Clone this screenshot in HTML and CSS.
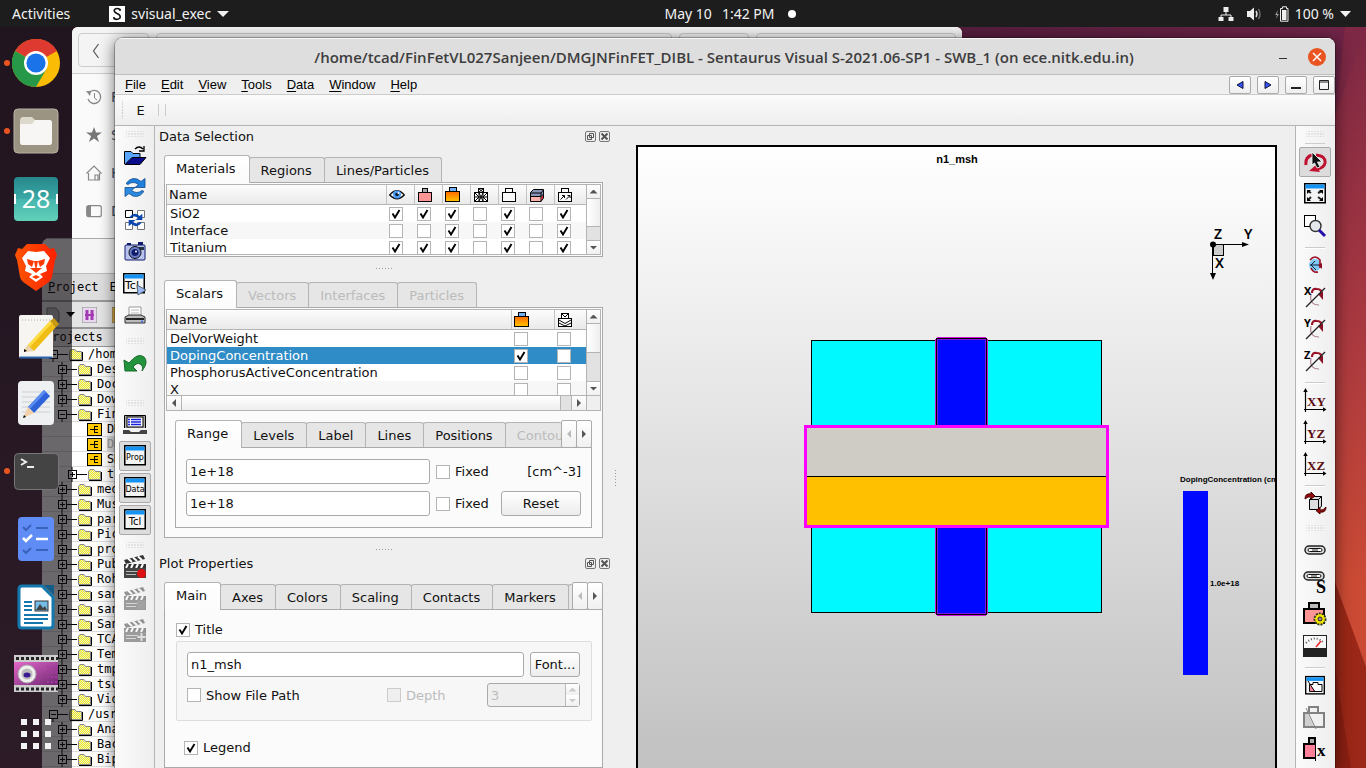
FILE: index.html
```html
<!DOCTYPE html>
<html lang="en">
<head>
<meta charset="utf-8">
<title>Sentaurus Visual - SWB_1</title>
<link rel="stylesheet" href="styles.css">
</head>
<body>
<svg class="defs" aria-hidden="true">
  <defs>
    <linearGradient id="orange" x1="0" y1="0" x2="0" y2="1"><stop offset="0" stop-color="#ff6a00"/><stop offset="1" stop-color="#ffc400"/></linearGradient>
    <linearGradient id="teal" x1="0" y1="0" x2="0" y2="1"><stop offset="0" stop-color="#27878c"/><stop offset=".5" stop-color="#3aa9a5"/><stop offset=".5" stop-color="#46b5ad"/><stop offset="1" stop-color="#62d1ba"/></linearGradient>
    <linearGradient id="purple" x1="0" y1="0" x2="1" y2="1"><stop offset="0" stop-color="#e268c8"/><stop offset="1" stop-color="#6e2672"/></linearGradient>
    <linearGradient id="bravefill" x1="0" y1="0" x2="1" y2="0"><stop offset="0" stop-color="#ff5500"/><stop offset="1" stop-color="#ff2000"/></linearGradient>
    <pattern id="dither" width="2" height="2" patternUnits="userSpaceOnUse"><rect width="2" height="2" fill="#ffff00"/><rect width="1" height="1" fill="#ddd"/><rect x="1" y="1" width="1" height="1" fill="#ddd"/></pattern>
    <symbol id="folder" viewBox="0 0 15 13"><path d="M1.500 11.500V3.500L3 1.500H7L8.500 3.500H13.500V11.500Z" fill="url(#dither)" stroke="#888"/><path d="M14.500 4V12.500H2" fill="none" stroke="#000"/></symbol>
    <symbol id="leaf" viewBox="0 0 15 13"><rect x=".5" y=".5" width="14" height="12" fill="#ffc800" stroke="#000"/><path d="M3 6.500H8M7.500 3V10M8 3.500H11M8 6.500H11M8 9.500H11" stroke="#000" fill="none"/></symbol>
    <symbol id="plus" viewBox="0 0 20 15"><path d="M5 0V15M9 7.500H20" stroke="#000"/><rect x="1.500" y="3.500" width="8" height="8" fill="#fff" stroke="#000"/><path d="M3 7.500H8M5.500 5V10" stroke="#000"/></symbol>
    <symbol id="minus" viewBox="0 0 20 15"><path d="M5 7V15M9 7.500H20" stroke="#000"/><rect x="1.500" y="3.500" width="8" height="8" fill="#fff" stroke="#000"/><path d="M3 7.500H8" stroke="#000"/></symbol>
    <symbol id="h-eye" viewBox="0 0 16 16"><path d="M.7 8Q8-.5 15.300 8Q8 15.500 .7 8Z" fill="#fff" stroke="#111" stroke-width="1.300"/><circle cx="8" cy="7.500" r="4" fill="#4a9cf5"/><circle cx="8" cy="7.500" r="1.800" fill="#123"/><circle cx="9.500" cy="6" r="1" fill="#fff"/></symbol>
    <symbol id="h-pink" viewBox="0 0 16 16"><rect x="5.500" y="1.500" width="5" height="4" fill="#aaa" stroke="#000"/><rect x="1.500" y="5.500" width="13" height="9" fill="#ff9696" stroke="#000"/></symbol>
    <symbol id="h-orange" viewBox="0 0 16 16"><rect x="4.500" y=".5" width="7" height="5" fill="#6fb1f7" stroke="#000"/><rect x=".5" y="4.500" width="14" height="10" fill="url(#orange)" stroke="#000"/></symbol>
    <symbol id="h-mesh" viewBox="0 0 16 16"><rect x="5.500" y="1.500" width="5" height="4" fill="#fff" stroke="#000"/><rect x="1.500" y="5.500" width="13" height="9" fill="#fff" stroke="#000"/><path d="M2 6L6 10L2 14M6 6V14M10 6V14M6 6L10 14M10 6L6 14M14 6L10 10L14 14M2 10H14M6 2L10 5M10 2L6 5" stroke="#000" fill="none"/></symbol>
    <symbol id="h-box" viewBox="0 0 16 16"><rect x="4.500" y="1.500" width="7" height="4" fill="#f8f8f8" stroke="#000"/><rect x="1.500" y="5.500" width="13" height="9" fill="#f8f8f8" stroke="#000"/></symbol>
    <symbol id="h-cube" viewBox="0 0 16 16"><path d="M1.500 5.500L4.500 2.500H14.500V11L12 14.500H1.500Z" fill="#8793b8" stroke="#000"/><rect x="2" y="10" width="10" height="4" fill="#ffb0a8"/><path d="M1.500 6H12V14.500M12 6L14.500 3M2 9.500H12L14.500 7" stroke="#000" fill="none"/><path d="M12.500 10L14 8.500V11L12.500 13Z" fill="#e22"/></symbol>
    <symbol id="h-vec" viewBox="0 0 16 16"><rect x="4.500" y="1.500" width="7" height="4" fill="#f8f8f8" stroke="#000"/><rect x="1.500" y="5.500" width="13" height="9" fill="#f8f8f8" stroke="#000"/><path d="M3.500 12.500L7 9M5 8.500H7.500V11M9 12.500L12.500 9M10.500 8.500H13V11" fill="none" stroke="#000"/></symbol>
    <symbol id="h-iso" viewBox="0 0 16 16"><rect x="4.500" y="1.500" width="7" height="5" fill="#fff" stroke="#000"/><rect x="1.500" y="6.500" width="13" height="8" fill="#fff" stroke="#000"/><path d="M2 8L8 11.500L14 8M2 11L8 14L14 11M5 2L8 5L11 2" fill="none" stroke="#000"/></symbol>
    <symbol id="window" viewBox="0 0 22 22"><rect x=".75" y="1.750" width="20.500" height="19" fill="#f4f4f4" stroke="#000" stroke-width="1.500"/><rect x="1.500" y="2.500" width="19" height="4" fill="#1593f5"/></symbol>
    <symbol id="arrows" viewBox="0 0 22 20"><path d="M2 6Q9-3 17 4L21 1V10H11L14.500 7Q9 3 4 7Z" fill="#1e80dc" stroke="#124a8a" stroke-width=".8"/><path d="M20 14Q13 23 5 16L1 19V10H11L7.500 13Q13 17 18 13Z" fill="#2b8be3" stroke="#124a8a" stroke-width=".8"/></symbol>
    <symbol id="arrows-dark" viewBox="0 0 22 20"><path d="M2 6Q9-3 17 4L21 1V10H11L14.500 7Q9 3 4 7Z" fill="#0a48b0"/><path d="M20 14Q13 23 5 16L1 19V10H11L7.500 13Q13 17 18 13Z" fill="#0a48b0"/></symbol>
    <symbol id="clap" viewBox="0 0 24 24"><path d="M1 5L20 0L22 4L3 9Z" fill="#333"/><path d="M5 3.500L9 7M10 2.500L14 6M15 1.500L19 5" stroke="#fff" stroke-width="2"/><rect x="1" y="9" width="22" height="4" fill="#333"/><path d="M5 9L3 13M10 9L8 13M15 9L13 13M20 9L18 13" stroke="#fff" stroke-width="2"/><rect x="1" y="13" width="22" height="10" fill="#444"/><path d="M3 16.500H15M3 19.500H13" stroke="#bbb"/></symbol>
    <symbol id="spin" viewBox="0 0 24 24"><path d="M9 8Q9 3 14 4Q19 4 19 10" fill="none" stroke="#9a1025" stroke-width="2.200"/><path d="M15 9L20 7V15Z" fill="#8a1025"/><path d="M8 9Q6 20 16 20" fill="none" stroke="#b08090" stroke-width="1.200"/><path d="M3 22L22 3" stroke="#222" stroke-width="1.200"/></symbol>
    <symbol id="axes" viewBox="0 0 24 24"><path d="M2.500 24V3M1 21.500H21" stroke="#000" stroke-width="1.200"/><path d="M.3 4L2.500 0L4.700 4ZM20 19.300L23.500 21.500L20 23.700Z" fill="#000"/></symbol>
    <symbol id="chain" viewBox="0 0 22 10"><rect x="1" y="1" width="20" height="8" rx="4" fill="#ddd" stroke="#222" stroke-width="1.500"/><rect x="4" y="3.500" width="14" height="3" rx="1.500" fill="#fff" stroke="#111"/><path d="M8 5H14" stroke="#333"/></symbol>
  </defs>
</svg>

<header class="topbar">
  <div class="topbar-left">
    <button class="bar-btn">Activities</button>
    <button class="bar-btn app-menu"><svg width="16" height="16"><rect width="16" height="16" fill="#fff"/><path d="M11 5V3.500Q8 1.500 5.500 3.500Q4.500 6 8 7.500Q12 9 11 12Q8 14.500 5 12.500V11" fill="none" stroke="#111" stroke-width="1.600"/></svg><span>svisual_exec</span><svg width="12" height="6"><path d="M0 0H12L6 6Z" fill="#f2f2f2"/></svg></button>
  </div>
  <button class="bar-btn clock"><span>May 10</span><span>1:42 PM</span><i class="note-dot"></i></button>
  <button class="bar-btn status" aria-label="System menu">
    <svg width="16" height="16"><path d="M8 6V9M3 11V9H13V11" stroke="#eee" fill="none"/><path d="M5.500 1H10.500V6H5.500ZM.5 11H5.500V15H.5ZM10.500 11H15.500V15H10.500Z" fill="#eee"/></svg>
    <svg width="16" height="16"><path d="M1 5H4L8 1.500V14.500L4 11H1Z" fill="#eee"/><path d="M10 5Q12 8 10 11" stroke="#ddd" fill="none" stroke-width="1.500"/><path d="M12.500 3Q15.500 8 12.500 13" stroke="#777" fill="none" stroke-width="1.300"/></svg>
    <svg width="15" height="16"><path d="M4 4L1 9H3L2 13L5 8H3Z" fill="#999"/><path d="M6.500 2.500H8.500V.8H12.500V2.500H14V15.200H6.500Z" fill="none" stroke="#eee"/><rect x="8" y="4" width="4.500" height="10" fill="#eee"/></svg>
    <span>100 %</span>
    <svg width="11" height="6"><path d="M0 0H11L5.500 6Z" fill="#f2f2f2"/></svg>
  </button>
</header>

<div class="desktop">
  <svg class="wall" viewBox="0 0 31 741" preserveAspectRatio="none" aria-hidden="true"><path d="M0 0H31V741H0Z" fill="#6f2347"/><path d="M10 0H31V741H0V90Z" fill="#7d2844"/><path d="M0 90L31 0V741H0Z" fill="url(#wallgrad)"/><path d="M0 555L31 640V741H0Z" fill="#9a2717"/><path d="M0 640L16 741H0Z" fill="#8a1f12"/><defs><linearGradient id="wallgrad" x1="0" y1="0" x2="0" y2="1"><stop offset="0" stop-color="#7d2844"/><stop offset=".4" stop-color="#a83840"/><stop offset=".75" stop-color="#ca4a34"/></linearGradient></defs></svg>

  <section class="files-window" aria-label="Files">
    <div class="files-head">
      <button class="files-back" aria-label="Back"><svg width="8" height="16"><path d="M6.500 1L1.500 8L6.500 15" fill="none" stroke="#555" stroke-width="1.200"/></svg></button>
      <div class="files-path"></div><div class="files-path end"></div><div class="files-path small"></div>
    </div>
    <ul class="files-list">
      <li><svg width="16" height="16"><path d="M3 4A6.500 6.500 0 1 1 2 10" fill="none" stroke="#888" stroke-width="1.300"/><path d="M0 2L5 2L4 7Z" fill="#888"/><path d="M8.500 4V9L11 11" fill="none" stroke="#888"/></svg>Recent</li>
      <li><svg width="16" height="16"><path d="M8 0L10 5.500H16L11 9L13 15L8 11.500L3 15L5 9L0 5.500H6Z" fill="#777"/></svg>Starred</li>
      <li><svg width="16" height="16"><path d="M.5 8.500L8 1L15.500 8.500M2.500 8V15H13.500V8M9 15V10H12V15" fill="none" stroke="#888" stroke-width="1.200"/></svg>Home</li>
      <li><svg width="16" height="16"><rect x=".7" y="2.700" width="14.600" height="11" rx="2" fill="none" stroke="#888" stroke-width="1.200"/><path d="M1 3H5V14H1Z" fill="#888"/></svg>Desktop</li>
    </ul>
  </section>

  <section class="swb-window" aria-label="Sentaurus Workbench">
    <div class="swb-title"></div>
    <div class="swb-menu"><span><u>P</u>roject</span><span>Edit</span></div>
    <div class="swb-tools">
      <svg width="14" height="16"><path d="M1 1H10L13 5V15H1Z" fill="#bbb" stroke="#777"/></svg>
      <svg width="9" height="5"><path d="M0 0H9L4.500 5Z"/></svg>
      <svg class="swb-h" width="15" height="16"><rect width="15" height="16" fill="#e8d8ee" stroke="#888"/><path d="M5 3V13M10 3V13" stroke="#a23ab4" stroke-width="3"/><path d="M3 8H12" stroke="#a23ab4" stroke-width="2"/></svg>
      <svg width="14" height="16"><rect width="14" height="16" fill="#e0b040" stroke="#777"/></svg>
    </div>
    <div class="swb-heading">Projects</div>
    <ul class="tree">
      <li class="root"><svg class="ex"><use href="#minus"/></svg><svg class="fo"><use href="#folder"/></svg>/home</li>
      <li><svg class="ex"><use href="#plus"/></svg><svg class="fo"><use href="#folder"/></svg>Desktop</li>
      <li><svg class="ex"><use href="#plus"/></svg><svg class="fo"><use href="#folder"/></svg>Documents</li>
      <li><svg class="ex"><use href="#plus"/></svg><svg class="fo"><use href="#folder"/></svg>Downloads</li>
      <li><svg class="ex"><use href="#minus"/></svg><svg class="fo"><use href="#folder"/></svg>FinFet</li>
      <li class="sub leaf"><svg class="fo"><use href="#leaf"/></svg>DMG</li>
      <li class="sub leaf"><svg class="fo"><use href="#leaf"/></svg><mark>DMGJN</mark></li>
      <li class="sub leaf"><svg class="fo"><use href="#leaf"/></svg>SMG</li>
      <li class="sub"><svg class="ex"><use href="#plus"/></svg><svg class="fo"><use href="#folder"/></svg>t</li>
      <li><svg class="ex"><use href="#plus"/></svg><svg class="fo"><use href="#folder"/></svg>media</li>
      <li><svg class="ex"><use href="#plus"/></svg><svg class="fo"><use href="#folder"/></svg>Music</li>
      <li><svg class="ex"><use href="#plus"/></svg><svg class="fo"><use href="#folder"/></svg>par</li>
      <li><svg class="ex"><use href="#plus"/></svg><svg class="fo"><use href="#folder"/></svg>Pictures</li>
      <li><svg class="ex"><use href="#plus"/></svg><svg class="fo"><use href="#folder"/></svg>project</li>
      <li><svg class="ex"><use href="#plus"/></svg><svg class="fo"><use href="#folder"/></svg>Public</li>
      <li><svg class="ex"><use href="#plus"/></svg><svg class="fo"><use href="#folder"/></svg>Rohit</li>
      <li><svg class="ex"><use href="#plus"/></svg><svg class="fo"><use href="#folder"/></svg>san</li>
      <li><svg class="ex"><use href="#plus"/></svg><svg class="fo"><use href="#folder"/></svg>san</li>
      <li><svg class="ex"><use href="#plus"/></svg><svg class="fo"><use href="#folder"/></svg>San</li>
      <li><svg class="ex"><use href="#plus"/></svg><svg class="fo"><use href="#folder"/></svg>TCAD</li>
      <li><svg class="ex"><use href="#plus"/></svg><svg class="fo"><use href="#folder"/></svg>Templates</li>
      <li><svg class="ex"><use href="#plus"/></svg><svg class="fo"><use href="#folder"/></svg>tmp</li>
      <li><svg class="ex"><use href="#plus"/></svg><svg class="fo"><use href="#folder"/></svg>tsu</li>
      <li><svg class="ex"><use href="#plus"/></svg><svg class="fo"><use href="#folder"/></svg>Videos</li>
      <li class="root"><svg class="ex"><use href="#minus"/></svg><svg class="fo"><use href="#folder"/></svg>/usr</li>
      <li><svg class="ex"><use href="#plus"/></svg><svg class="fo"><use href="#folder"/></svg>Ana</li>
      <li><svg class="ex"><use href="#plus"/></svg><svg class="fo"><use href="#folder"/></svg>Bac</li>
      <li><svg class="ex"><use href="#plus"/></svg><svg class="fo"><use href="#folder"/></svg>Bip</li>
    </ul>
  </section>

  <nav class="launcher" aria-label="Dock">
    <button class="running" aria-label="Chrome"><svg viewBox="0 0 48 48"><circle cx="24" cy="24" r="24" fill="#fbbc05"/><path d="M24 24L3.200 12A24 24 0 0 1 44.800 12Z" fill="#df3a30"/><path d="M24 0A24 24 0 0 1 44.800 12H24Z" fill="#df3a30"/><path d="M24 24L3.200 12A24 24 0 0 0 24 48L34.400 30Z" fill="#279847"/><circle cx="24" cy="24" r="12" fill="#fff"/><circle cx="24" cy="24" r="9.600" fill="#1a73e8"/></svg></button>
    <button class="running" aria-label="Files"><svg viewBox="0 0 48 48"><rect x="2" y="2" width="44" height="44" rx="4" fill="#9b9483" stroke="#b8b2a4"/><path d="M8 14Q8 10 11 10H20L23 13H37Q40 13 40 16V35Q40 38 37 38H11Q8 38 8 35Z" fill="#dcd8cb"/><path d="M8 17H20L23 13H37Q40 13 40 16V35Q40 38 37 38H11Q8 38 8 35Z" fill="#f7f6f4"/></svg></button>
    <button aria-label="Calendar"><svg viewBox="0 0 48 48"><rect x="2" y="2" width="44" height="44" rx="4" fill="url(#teal)"/><path d="M3 19V29M45 19V29" stroke="#fff" stroke-width="2"/><text x="24" y="33" class="cal-text" text-anchor="middle">28</text></svg></button>
    <button aria-label="Brave"><svg viewBox="0 0 48 48"><path d="M15 1H33L38 6L42 5L45 12L43 17L40 34Q39 38 34 41L24 48L14 41Q9 38 8 34L5 17L3 12L6 5L10 6Z" fill="url(#bravefill)"/><path d="M24 9L32 8L38 15L34 23L35 28L28 31L31 34L24 39L17 34L20 31L13 28L14 23L10 15L16 8Z" fill="#fff"/><path d="M15 16L22 18L20 24L16 21ZM33 16L26 18L28 24L32 21ZM22 18L24 28L26 18M18 25L24 30L30 25M20 34L24 32L28 34L24 36Z" fill="#ff3a00"/></svg></button>
    <button aria-label="Text editor"><svg viewBox="0 0 48 48"><path d="M9 4H39Q41 4 41 6V45Q41 47 39 47H9Q7 47 7 45V6Q7 4 9 4Z" fill="#f6f5f1"/><path d="M8 46.500H40" stroke="#2a66b0" stroke-width="2"/><path d="M10 9H38" stroke="#aaa" stroke-dasharray="1 2"/><path d="M16 34L38 10L44 16L22 40L12 40Z" fill="#f0bd14"/><path d="M16 34L38 10L40 12L18 36Z" fill="#ffdd45"/><path d="M38 10L42 7L47 13L44 16Z" fill="#c89a10"/><path d="M16 34L22 40L12 41Z" fill="#e8d2b0"/><path d="M12 38L15 40L12 41Z"/></svg></button>
    <button aria-label="Editor"><svg viewBox="0 0 48 48"><rect x="6" y="2" width="36" height="44" rx="4" fill="#eef0f2"/><path d="M10 13H38M10 18H38M10 23H38M10 28H38M10 33H38" stroke="#ccd0d4"/><path d="M16 28L32 11L38 17L22 34Z" fill="#2d62d9"/><path d="M16 28L32 11L34 13L18 30Z" fill="#5b8cf0"/><path d="M16 28L22 34L11 39Z" fill="#f0d0a8"/><path d="M12 36L14 38L11 39Z"/></svg></button>
    <button class="running" aria-label="Terminal"><svg viewBox="0 0 48 48"><rect x="2.500" y="6.500" width="44" height="36" rx="4" fill="#444" stroke="#777"/><path d="M9 12L14 15L9 18M15 20H22" fill="none" stroke="#eee" stroke-width="2"/></svg></button>
    <button aria-label="Tasks"><svg viewBox="0 0 48 48"><rect x="6" y="2" width="36" height="44" rx="4" fill="#5f8df5"/><path d="M11 12L14 15L19 10M11 35L14 38L19 33M24 13H36M24 35H36" fill="none" stroke="#3a62bb" stroke-width="2"/><path d="M11 23L14 26L20 20M24 24H36" fill="none" stroke="#fff" stroke-width="2.500"/></svg></button>
    <button aria-label="Writer"><svg viewBox="0 0 48 48"><path d="M10 3H30L41 14V42Q41 45 38 45H10Q7 45 7 42V6Q7 3 10 3Z" fill="#fff" stroke="#1478ad" stroke-width="3"/><path d="M32 2H42V12Z" fill="#115c88"/><path d="M12 19H20M12 23H20M12 27H20M12 32H36M12 36H36M12 40H31" stroke="#1478ad" stroke-width="2"/><rect x="23" y="18" width="13" height="10" fill="#76bce8" stroke="#333"/><path d="M24 27L28 21L31 25L33 23L35 27Z" fill="#444"/></svg></button>
    <button aria-label="Video"><svg viewBox="0 0 48 48"><rect x="2" y="4" width="44" height="37" fill="#ccc"/><path d="M4 7.500H46M4 38H46" stroke="#222" stroke-width="3" stroke-dasharray="3 2"/><rect x="2" y="11" width="44" height="23" fill="url(#purple)"/><path d="M36 15V32M40 15V32M44 15V32" stroke="#a33aa0" stroke-width="2" stroke-dasharray="2 3"/><circle cx="15" cy="23" r="9" fill="#eee" stroke="#aaa"/><circle cx="15" cy="23" r="5.500" fill="#bbb"/><ellipse cx="15" cy="24" rx="3.500" ry="2.500" fill="#3a1890"/></svg></button>
    <button class="apps" aria-label="Show applications"><svg viewBox="0 0 48 48"><path d="M9 8h6v6H9zM21 8h6v6h-6zM33 8h6v6h-6zM9 20h6v6H9zM21 20h6v6h-6zM33 20h6v6h-6zM9 32h6v6H9zM21 32h6v6h-6zM33 32h6v6h-6z" fill="#f2f2f2"/></svg></button>
  </nav>

  <main class="app">
    <div class="titlebar">
      <h1>/home/tcad/FinFetVL027Sanjeen/DMGJNFinFET_DIBL - Sentaurus Visual S-2021.06-SP1 - SWB_1 (on ece.nitk.edu.in)</h1>
      <button class="win-min" aria-label="Minimise"></button>
      <button class="win-close" aria-label="Close"><svg width="18" height="18"><path d="M5 5L13 13M13 5L5 13" stroke="#fff" stroke-width="1.500"/></svg></button>
    </div>
    <div class="menubar">
      <nav><a href="#"><u>F</u>ile</a><a href="#"><u>E</u>dit</a><a href="#"><u>V</u>iew</a><a href="#"><u>T</u>ools</a><a href="#"><u>D</u>ata</a><a href="#"><u>W</u>indow</a><a href="#"><u>H</u>elp</a></nav>
      <div class="mdi">
        <button aria-label="Previous plot"><svg width="10" height="8"><path d="M8 .5V7.500L2 4Z" fill="#3355ff" stroke="#113"/></svg></button>
        <button aria-label="Next plot"><svg width="10" height="8"><path d="M2 .5V7.500L8 4Z" fill="#3355ff" stroke="#113"/></svg></button>
        <button aria-label="Minimise plot"><svg width="10" height="10"><path d="M0 8H10" stroke="#222" stroke-width="2"/></svg></button>
        <button aria-label="Maximise plot"><svg width="10" height="10"><path d="M.5 .5H9.500V9.500H.5ZM1 2H9" fill="none" stroke="#222"/></svg></button>
      </div>
    </div>
    <div class="toolrow"><i class="dots-v"></i><button class="e-btn">E</button><i class="vline"></i><i class="vline"></i></div>

    <div class="work">
      <div class="tools left" role="toolbar" aria-label="Files and views">
        <i class="dots-h first"></i>
        <button aria-label="Open"><svg viewBox="0 0 24 24"><path d="M1.500 20V7.500H8L10 9.500H17V14" fill="#5aa5ff" stroke="#000"/><path d="M2 20.500L9 13.500H23L17 20.500Z" fill="#0a0a8c" stroke="#000"/><path d="M12 5Q16 1 20 5M21 2V7H16" fill="none" stroke="#000" stroke-width="1.300"/></svg></button>
        <button aria-label="Reload"><svg viewBox="0 0 24 24"><use href="#arrows" x="1" y="1" width="22" height="21"/></svg></button>
        <button aria-label="Reload all"><svg viewBox="0 0 24 24"><path d="M2.500 2.500H9.500V9.500H2.500Z" fill="#fff" stroke="#000"/><path d="M14.500 2.500H21.500V9.500H14.500ZM2.500 14.500H9.500V21.500H2.500ZM14.500 14.500H21.500V21.500H14.500Z" fill="#fff" stroke="#777"/><use href="#arrows-dark" x="5" y="5" width="15" height="14"/></svg></button>
        <button aria-label="Snapshot"><svg viewBox="0 0 24 24"><rect x="2" y="5" width="20" height="15" rx="1" fill="#b8c2ee" stroke="#111b6c"/><path d="M4 3H8V5H4ZM15 2H20V5H15Z" fill="#111b6c"/><rect x="16" y="7" width="5" height="3" fill="#234"/><circle cx="12" cy="12.500" r="6" fill="#6a7cc8" stroke="#111"/><circle cx="12" cy="12.500" r="3.500" fill="#111b6c"/><circle cx="13" cy="11.500" r="1" fill="#fff"/></svg></button>
        <button aria-label="Run Tcl"><svg viewBox="0 0 24 24"><use href="#window" x="0" y="0" width="22" height="22"/><text x="2" y="17" class="win-text big">Tcl</text><path d="M14 13L23 18L15 23Z" fill="#9ab8f4" stroke="#567"/></svg></button>
        <button aria-label="Print"><svg viewBox="0 0 24 24"><path d="M6 12V3H18V12" fill="#fff" stroke="#999"/><path d="M8 6H16M8 9H16" stroke="#bbb"/><path d="M2 13L6 11H18L22 13V19H2Z" fill="#bbb" stroke="#333"/><path d="M3 15H21" stroke="#222" stroke-width="2"/><circle cx="19" cy="17.500" r="1" fill="#36f"/></svg></button>
        <i class="dots-h"></i>
        <button aria-label="Undo"><svg viewBox="0 0 24 24"><path d="M1 9L2 20L14 20L10 16Q14 11 17 13Q21 15 19 20Q26 11 21 6Q15 1 6 12Z" fill="#23943c" stroke="#176b29"/></svg></button>
        <i class="dots-h wide"></i>
        <button aria-label="Screen"><svg viewBox="0 0 24 24"><path d="M1.500 16V3.500H22.500V16" fill="#aaa" stroke="#000"/><rect x="4" y="5" width="16" height="10" fill="#fff" stroke="#000"/><path d="M5 7.500H7M8 7.500H18M5 10H7M8 10H18M5 12.500H7M8 12.500H18" stroke="#1722e0" stroke-width="1.400"/><path d="M0 18H6L8 20H16L18 18H24V22H0Z" fill="#444"/></svg></button>
        <button class="pressed" aria-label="Properties"><svg viewBox="0 0 24 24"><use href="#window" x="1" y="0" width="22" height="22"/><text x="12" y="16" class="win-text" text-anchor="middle">Prop</text></svg></button>
        <button class="pressed" aria-label="Data"><svg viewBox="0 0 24 24"><use href="#window" x="1" y="0" width="22" height="22"/><text x="12" y="16" class="win-text" text-anchor="middle">Data</text></svg></button>
        <button class="pressed" aria-label="Tcl console"><svg viewBox="0 0 24 24"><use href="#window" x="1" y="0" width="22" height="22"/><text x="12" y="17" class="win-text mid" text-anchor="middle">Tcl</text></svg></button>
        <i class="dots-h"></i>
        <button aria-label="Record movie"><svg viewBox="0 0 24 24"><use href="#clap" width="24" height="24"/><circle cx="18.500" cy="18.500" r="4.500" fill="#d11"/></svg></button>
        <button aria-label="Stop movie" disabled><svg viewBox="0 0 24 24"><use href="#clap" width="24" height="24"/><rect x="14" y="14" width="8" height="8" fill="#555"/></svg></button>
        <button aria-label="Add frame" disabled><svg viewBox="0 0 24 24"><use href="#clap" width="24" height="24"/><path d="M18.500 14V22M14.500 18H22.500" stroke="#ccc" stroke-width="2"/></svg></button>
      </div>

      <div class="docks">
        <div class="dock-title"><h2>Data Selection</h2>
          <button aria-label="Float"><svg width="11" height="11"><path d="M4.500 2.500H8.500V6.500H4.500ZM2.500 4.500H6.500V8.500H2.500Z" fill="none" stroke="#555"/></svg></button><button aria-label="Close"><svg width="11" height="11"><path d="M2.500 2.500L8.500 8.500M8.500 2.500L2.500 8.500" stroke="#555" stroke-width="2"/></svg></button></div>
        <div class="dock-body">
          <div class="tabs" role="tablist"><button class="on" role="tab">Materials</button><button role="tab">Regions</button><button role="tab">Lines/Particles</button></div>
          <div class="pane">
            <div class="grid materials">
              <div class="grid-view">
                <table>
                  <thead><tr><th class="name">Name</th><th><svg><use href="#h-eye"/></svg></th><th><svg><use href="#h-pink"/></svg></th><th><svg><use href="#h-orange"/></svg></th><th><svg><use href="#h-mesh"/></svg></th><th><svg><use href="#h-box"/></svg></th><th><svg><use href="#h-cube"/></svg></th><th class="last"><svg><use href="#h-vec"/></svg></th></tr></thead>
                  <tbody>
                    <tr><td class="name">SiO2</td><td><input type="checkbox" aria-label="SiO2 visible" checked></td><td><input type="checkbox" aria-label="SiO2 bulk" checked></td><td><input type="checkbox" aria-label="SiO2 field" checked></td><td><input type="checkbox" aria-label="SiO2 mesh"></td><td><input type="checkbox" aria-label="SiO2 border" checked></td><td><input type="checkbox" aria-label="SiO2 translucent"></td><td><input type="checkbox" aria-label="SiO2 vectors" checked></td></tr>
                    <tr class="alt"><td class="name">Interface</td><td><input type="checkbox" aria-label="Interface visible"></td><td><input type="checkbox" aria-label="Interface bulk"></td><td><input type="checkbox" aria-label="Interface field" checked></td><td><input type="checkbox" aria-label="Interface mesh"></td><td><input type="checkbox" aria-label="Interface border" checked></td><td><input type="checkbox" aria-label="Interface translucent"></td><td><input type="checkbox" aria-label="Interface vectors" checked></td></tr>
                    <tr><td class="name">Titanium</td><td><input type="checkbox" aria-label="Titanium visible" checked></td><td><input type="checkbox" aria-label="Titanium bulk" checked></td><td><input type="checkbox" aria-label="Titanium field" checked></td><td><input type="checkbox" aria-label="Titanium mesh"></td><td><input type="checkbox" aria-label="Titanium border" checked></td><td><input type="checkbox" aria-label="Titanium translucent"></td><td><input type="checkbox" aria-label="Titanium vectors" checked></td></tr>
                  </tbody>
                </table>
              </div>
              <div class="vscroll"><i class="arr up"></i><i class="thumb"></i><i class="track"></i><i class="arr down"></i></div>
            </div>
          </div>
        </div>
        <div class="splitter"><i class="dots-line"></i></div>
        <div class="dock-body">
          <div class="tabs" role="tablist"><button class="on" role="tab">Scalars</button><button role="tab" disabled>Vectors</button><button role="tab" disabled>Interfaces</button><button role="tab" disabled>Particles</button></div>
          <div class="pane">
            <div class="grid scalars">
              <div class="grid-main">
                <div class="grid-view">
                  <table>
                    <thead><tr><th class="name">Name</th><th class="field"><svg><use href="#h-orange"/></svg></th><th class="iso"><svg><use href="#h-iso"/></svg></th></tr></thead>
                    <tbody>
                      <tr><td class="name">DelVorWeight</td><td><input type="checkbox" aria-label="DelVorWeight field"></td><td><input type="checkbox" aria-label="DelVorWeight contour"></td></tr>
                      <tr class="sel"><td class="name">DopingConcentration</td><td><input type="checkbox" aria-label="DopingConcentration field" checked></td><td><input type="checkbox" aria-label="DopingConcentration contour"></td></tr>
                      <tr><td class="name">PhosphorusActiveConcentration</td><td><input type="checkbox" aria-label="PhosphorusActiveConcentration field"></td><td><input type="checkbox" aria-label="PhosphorusActiveConcentration contour"></td></tr>
                      <tr class="alt"><td class="name">X</td><td><input type="checkbox" aria-label="X field"></td><td><input type="checkbox" aria-label="X contour"></td></tr>
                    </tbody>
                  </table>
                </div>
                <div class="vscroll"><i class="arr up"></i><i class="thumb"></i><i class="track"></i><i class="arr down"></i></div>
              </div>
              <div class="hscroll"><i class="arr lt"></i><i class="thumb"></i><i class="track"></i><i class="arr rt"></i><i class="corner"></i></div>
            </div>
            <div class="range-tabs">
              <div class="tabs" role="tablist"><button class="on" role="tab">Range</button><button role="tab">Levels</button><button role="tab">Label</button><button role="tab">Lines</button><button role="tab">Positions</button><button class="cut" role="tab" disabled>Contours</button><span class="tab-arrows"><button class="arr lt" aria-label="Scroll tabs left" disabled></button><button class="arr rt" aria-label="Scroll tabs right"></button></span></div>
              <div class="pane range-form">
                <input type="text" value="1e+18" aria-label="Minimum"><label><input type="checkbox">Fixed</label><span class="unit">[cm^-3]</span>
                <input type="text" value="1e+18" aria-label="Maximum"><label><input type="checkbox">Fixed</label><button class="btn">Reset</button>
              </div>
            </div>
          </div>
        </div>
        <div class="splitter short"><i class="dots-line"></i></div>
        <div class="dock-title"><h2>Plot Properties</h2>
          <button aria-label="Float"><svg width="11" height="11"><path d="M4.500 2.500H8.500V6.500H4.500ZM2.500 4.500H6.500V8.500H2.500Z" fill="none" stroke="#555"/></svg></button><button aria-label="Close"><svg width="11" height="11"><path d="M2.500 2.500L8.500 8.500M8.500 2.500L2.500 8.500" stroke="#555" stroke-width="2"/></svg></button></div>
        <div class="dock-body grow">
          <div class="tabs" role="tablist"><button class="on" role="tab">Main</button><button role="tab">Axes</button><button role="tab">Colors</button><button role="tab">Scaling</button><button role="tab">Contacts</button><button role="tab">Markers</button><button class="cut sliver" role="tab" aria-label="More"></button><span class="tab-arrows"><button class="arr lt" aria-label="Scroll tabs left" disabled></button><button class="arr rt" aria-label="Scroll tabs right"></button></span></div>
          <div class="pane props">
            <label><input type="checkbox" checked>Title</label>
            <fieldset>
              <div class="row"><input type="text" value="n1_msh" aria-label="Title text"><button class="btn font">Font...</button></div>
              <div class="row opts"><label class="path"><input type="checkbox">Show File Path</label><label class="off"><input type="checkbox" disabled>Depth</label><span class="spin"><input type="text" value="3" aria-label="Depth levels" disabled><span class="steps"><i class="arr up"></i><i class="arr down"></i></span></span></div>
            </fieldset>
            <label class="legend"><input type="checkbox" checked>Legend</label>
          </div>
        </div>
      </div>
      <div class="side-grip"><i class="dots-col"></i></div>

      <div class="plot-area">
        <div class="plot">
          <svg width="637" height="621" viewBox="638 147 637 621" role="img" aria-label="n1_msh plot">
            <g shape-rendering="crispEdges">
              <rect x="811.500" y="340.500" width="290" height="272" fill="#00f8ff" stroke="#000"/>
              <path d="M935 339H988V614H935Z" fill="#d016d8"/><path d="M937 337H986V616H937Z" fill="#d016d8"/>
              <path d="M936 338H987V615H936Z" fill="#000"/>
              <path d="M937 339H986V614H937Z" fill="#7a14e0"/><path d="M938 340H985V613H938Z" fill="#0008ff"/>
              <rect x="805.500" y="426.500" width="302" height="100" fill="#cfccc5"/>
              <rect x="806" y="476" width="301" height="50" fill="#ffc000"/>
              <path d="M806 476.500H1107" stroke="#000"/>
              <rect x="805.500" y="426.500" width="302" height="100" fill="none" stroke="#f0f" stroke-width="3"/>
              <rect x="1183" y="491" width="25" height="184" fill="#0008ff"/>
              <rect x="1213.500" y="244.500" width="10" height="11" fill="#ccc" stroke="#000"/>
              <path d="M1213 244.500H1244M1212.500 244V274" stroke="#000"/>
            </g>
            <circle cx="1213" cy="244.500" r="3"/><path d="M1242 242L1249 244.500L1242 247ZM1210 273H1216L1213 280Z"/>
            <text x="957" y="163" class="plot-title" text-anchor="middle">n1_msh</text>
            <text x="1214" y="239" class="axis">Z</text><text x="1244" y="239" class="axis">Y</text><text x="1215" y="268" class="axis">X</text>
            <text x="1180" y="482" class="scale">DopingConcentration (cm^-3)</text>
            <text x="1210" y="586" class="scale">1.0e+18</text>
          </svg>
        </div>
      </div>

      <div class="tools right" role="toolbar" aria-label="View">
        <i class="dots-h first"></i><i class="sep top"></i>
        <button class="pressed" aria-label="Select and rotate"><svg viewBox="0 0 24 24"><path d="M3 15Q2 7 9 5M13 5Q23 6 22 13Q21 18 14 19" fill="none" stroke="#c01030" stroke-width="3"/><path d="M6 21L13 15L17 22Z" fill="#c01030"/><path d="M9 2L19 12L14.500 12L17 17L14 18L11.500 13L9 15Z" fill="#111" stroke="#fff" stroke-width=".8"/></svg></button>
        <button aria-label="Reset view"><svg viewBox="0 0 24 24"><use href="#window" x="1" y="0" width="22" height="22"/><path d="M5 9L8 11M5 18L8 15M19 9L15 11M19 18L15 15" stroke="#222" stroke-width="2"/><path d="M4 8H8L4 12ZM20 8H16L20 12ZM4 19H8L4 15ZM20 19H16L20 15Z"/></svg></button>
        <button aria-label="Zoom"><svg viewBox="0 0 24 24"><rect x="1.500" y="1.500" width="11" height="11" fill="#fff" stroke="#000"/><circle cx="12.500" cy="12" r="5.500" fill="#e4e8ea" stroke="#333" stroke-width="1.400"/><path d="M16 16L22 22" stroke="#2410a8" stroke-width="3"/></svg></button>
        <i class="sep"></i>
        <button aria-label="Rotate sphere"><svg viewBox="0 0 24 24"><circle cx="12" cy="12" r="6" fill="#7ec8f4"/><path d="M7 7Q12 1 17 7V15M8 15Q10 20 15 19" fill="none" stroke="#9a1025" stroke-width="1.600"/><path d="M7 12H16M12 8L8 12L13 17" fill="none" stroke="#123"/><path d="M15 12L19 10V16Z" fill="#8a1025"/></svg></button>
        <button aria-label="Rotate X"><svg viewBox="0 0 24 24"><use href="#spin" width="24" height="24"/><text x="1" y="10" class="rot">X</text></svg></button>
        <button aria-label="Rotate Y"><svg viewBox="0 0 24 24"><use href="#spin" width="24" height="24"/><text x="1" y="10" class="rot">Y</text></svg></button>
        <button aria-label="Rotate Z"><svg viewBox="0 0 24 24"><use href="#spin" width="24" height="24"/><text x="1" y="10" class="rot">Z</text></svg></button>
        <i class="sep"></i>
        <button aria-label="XY plane"><svg viewBox="0 0 24 24"><use href="#axes" width="24" height="24"/><text x="4" y="18" class="plane">XY</text></svg></button>
        <button aria-label="YZ plane"><svg viewBox="0 0 24 24"><use href="#axes" width="24" height="24"/><text x="4" y="18" class="plane">YZ</text></svg></button>
        <button aria-label="XZ plane"><svg viewBox="0 0 24 24"><use href="#axes" width="24" height="24"/><text x="4" y="18" class="plane">XZ</text></svg></button>
        <i class="sep"></i>
        <button aria-label="Rotate 90 degrees"><svg viewBox="0 0 24 24"><path d="M6.500 8.500L9.500 5.500H18.500V15L15.500 18.500H6.500Z" fill="#ddd" stroke="#000"/><path d="M6.500 8.500H15.500V18.500M15.500 8.500L18.500 5.500" fill="none" stroke="#000"/><path d="M2 8Q2 2 8 3V1L12 5L8 8V6Q5 5 2 8ZM23 16Q23 22 17 21V23L13 19.500L17 16.500V19Q20 20 23 16Z" fill="#9a0a0a" stroke="#400"/></svg></button>
        <i class="dots-h"></i>
        <button aria-label="Link"><svg viewBox="0 0 24 24"><use href="#chain" x="1" y="7" width="22" height="10"/></svg></button>
        <button aria-label="Link special"><svg viewBox="0 0 24 24"><use href="#chain" x="0" y="1" width="22" height="10"/><text x="13" y="23" class="bigs">S</text></svg></button>
        <button aria-label="Material settings"><svg viewBox="0 0 24 24"><path d="M6 1H16V7H6Z" fill="#bbb" stroke="#000" stroke-width="2"/><rect x="1" y="7" width="20" height="14" fill="#ff9696" stroke="#000" stroke-width="2"/><circle cx="17" cy="17" r="5.500" fill="#f2e600" stroke="#332" stroke-width="2" stroke-dasharray="2 1"/><circle cx="17" cy="17" r="4.500" fill="#f2e600"/><circle cx="17" cy="17" r="2" fill="#a8a" stroke="#222"/></svg></button>
        <button aria-label="Probe"><svg viewBox="0 0 24 24"><rect x=".5" y="1.500" width="23" height="21" fill="#f8f8f8" stroke="#222"/><rect x="0" y="14" width="24" height="9" fill="#222"/><path d="M3 9Q12 0 21 9" fill="none" stroke="#555" stroke-width="2" stroke-dasharray="1 2"/><path d="M13 13L18 7" stroke="#e22" stroke-width="1.500"/></svg></button>
        <i class="sep"></i>
        <button aria-label="Cut window"><svg viewBox="0 0 24 24"><use href="#window" x="2" y="2" width="20" height="20"/><path d="M6.500 11.500H10V9.500H15V11.500H19V18.500H6.500Z" fill="#fff" stroke="#000"/><path d="M7 12L12 18H7Z" fill="#ff8098"/><path d="M5 8L12 19" stroke="#000"/></svg></button>
        <button aria-label="Cut line" disabled><svg viewBox="0 0 24 24"><path d="M6 2H15V8H6Z" fill="#eee" stroke="#111" stroke-width="2"/><path d="M1 8H21V22H1Z" fill="#eee" stroke="#111" stroke-width="2"/><path d="M2 9H5L11 21H2Z" fill="#aaa"/><path d="M3 3L13 24" stroke="#111"/></svg></button>
        <button aria-label="Cut X"><svg viewBox="0 0 24 24"><path d="M6 1H12V7H6Z" fill="#aaa" stroke="#000" stroke-width="2"/><path d="M13 7H1V21H13" fill="#ff8098" stroke="#000" stroke-width="2"/><path d="M12.500 0V24" stroke="#000"/><text x="14" y="19" class="cutx">x</text></svg></button>
      </div>
    </div>
  </main>
</div>
</body>
</html>
```
FILE: styles.css
```css
* { box-sizing: border-box; }
body { margin: 0; height: 100vh; display: flex; flex-direction: column; overflow: hidden; font: 13px/17px "DejaVu Sans", sans-serif; color: #111; background: #21131d; }
button { font: inherit; color: inherit; padding: 0; border: 0; background: none; }
h1, h2, ul { margin: 0; padding: 0; }
ul { list-style: none; }
svg { display: block; flex: none; }
.defs { position: absolute; width: 0; height: 0; }

/* top panel */
.topbar { flex: none; height: 27px; display: grid; grid-template-columns: 1fr auto 1fr; align-items: center; padding: 0 15px 0 12px; background: #1d1d1d; color: #f2f2f2; font: 14px/20px "Noto Sans", sans-serif; }
.topbar-left { display: flex; gap: 39px; }
.bar-btn { display: flex; align-items: center; gap: 6px; }
.clock { gap: 10px; padding-left: 98px; }
.note-dot { width: 8px; height: 8px; margin-left: 4px; border-radius: 50%; background: #fff; }
.status { justify-self: end; gap: 6px; }
.status svg:nth-child(2) { margin-left: 6px; }
.status svg:nth-child(3) { margin-left: 6px; }

.desktop { position: relative; flex: 1; min-height: 0; overflow: hidden; background: linear-gradient(90deg, #21131d 0 5%, #4a1a38 60%, #74264a 100%); }
.desktop::before { content: ""; position: absolute; inset: 0 auto 0 0; width: 72px; background: linear-gradient(#3c2438, #5c3850); }
.wall { position: absolute; top: 0; right: 0; width: 31px; height: 100%; }

/* file manager window */
.files-window { position: absolute; left: 72px; top: 0; width: 890px; height: 212px; border-radius: 6px 6px 0 0; background: #fafafa; overflow: hidden; }
.files-head { display: flex; gap: 7px; height: 47px; padding: 6px; background: #f4f4f4; border-bottom: 1px solid #ccc; }
.files-back { display: flex; width: 71px; height: 34px; padding: 9px 13px; border: 1px solid #ccc; border-radius: 4px; }
.files-path { flex: 1; height: 34px; border: 1px solid #ccc; border-radius: 4px; }
.files-path.end { flex: none; width: 70px; }
.files-path.small { flex: none; width: 200px; }
.files-list { padding: 4px 0 0 14px; color: #456; font-size: 14px; }
.files-list li { display: flex; align-items: center; gap: 9px; height: 38px; }

/* workbench window */
.swb-window { position: absolute; left: 42px; top: 211px; width: 300px; bottom: 0; overflow: hidden; border-radius: 8px 0 0 0; background: #fff; font: 12px/15px "DejaVu Sans Mono", monospace; color: #000; }
.swb-title { height: 36px; border-top: 1px solid #aaa; background: #f4f4f4; border-bottom: 1px solid #bbb; }
.swb-menu { display: flex; gap: 11px; height: 28px; padding: 6px; background: #dedede; border-bottom: 2px solid #999; }
.swb-tools { display: flex; align-items: center; gap: 6px; height: 27px; padding-left: 4px; background: #e4e4e4; border-bottom: 2px solid #999; }
.swb-h { margin-left: 1px; margin-right: 9px; }
.swb-heading { height: 18px; padding-left: 3px; line-height: 17px; background: #e2e2e2; border-bottom: 1px solid #999; }
.tree li { display: flex; align-items: center; height: 15px; padding-left: 15px; border-bottom: 1px solid #ddd; white-space: nowrap; }
.tree li.root { padding-left: 6px; }
.tree li.sub { padding-left: 25px; }
.tree li.leaf { padding-left: 45px; }
.tree .ex { width: 20px; height: 15px; }
.tree .fo { width: 15px; height: 13px; margin-right: 5px; }
.tree mark { color: #999; background: #ddd; }

/* launcher */
.launcher { position: absolute; inset: 0 auto 0 0; width: 72px; display: flex; flex-direction: column; gap: 20px; padding: 12px 0 0; background: rgba(16, 12, 16, .62); }
.launcher button { position: relative; flex: none; display: flex; justify-content: center; height: 48px; }
.launcher svg { width: 48px; height: 48px; }
.launcher .running::before { content: ""; position: absolute; left: 4px; top: 21px; width: 6px; height: 6px; border-radius: 50%; background: #e95420; }
.launcher .apps { margin-top: -8px; }
.cal-text { font: 25px "Noto Sans", sans-serif; fill: #fff; }

/* application window */
.app { position: absolute; left: 115px; right: 31px; top: 11px; bottom: 0; display: flex; flex-direction: column; overflow: hidden; border-radius: 8px 8px 0 0; background: #efefef; box-shadow: 0 0 0 1px rgba(0,0,0,.25), 0 2px 16px rgba(0,0,0,.6); }
.titlebar { flex: none; display: flex; align-items: center; justify-content: flex-end; height: 37px; padding-right: 9px; background: #dedede; border-top: 1px solid #f6f6f6; border-bottom: 1px solid #bfbfbf; }
.titlebar h1 { flex: 1; padding-left: 54px; text-align: center; font: 600 15px/20px "Open Sans", "Noto Sans", sans-serif; color: #3d3d3d; white-space: nowrap; }
.win-min { width: 8px; height: 4px; border-bottom: 1px solid #333; }
.win-close { width: 18px; height: 18px; margin-left: 21px; border-radius: 50%; background: #e95420; }
.menubar { flex: none; display: flex; justify-content: space-between; height: 20px; padding-left: 10px; border-bottom: 1px solid #ccc; font: 13px/19px "Liberation Sans", sans-serif; }
.menubar nav { display: flex; gap: 15px; }
.menubar a { color: #000; text-decoration: none; }
.menubar u { text-underline-offset: 2px; }
.mdi { display: flex; gap: 6px; padding-top: 1px; }
.mdi button { display: flex; align-items: center; justify-content: center; width: 22px; height: 18px; border: 1px solid #aaa; border-radius: 2px; background: linear-gradient(#fff, #eee); }
.toolrow { flex: none; display: flex; align-items: center; height: 31px; padding-left: 5px; border-bottom: 1px solid #b4b4b4; background: linear-gradient(#fbfbfb, #eee); }
.e-btn { width: 19px; margin: 0 8px 0 6px; }
.vline { width: 1px; height: 12px; margin-right: 6px; background: #ccc; }

.work { flex: 1; min-height: 0; display: flex; }
.tools { flex: none; width: 40px; display: flex; flex-direction: column; align-items: center; background: linear-gradient(90deg, #fbfbfb, #eee); }
.tools.left { border-right: 1px solid #b4b4b4; }
.tools.right { border-left: 1px solid #b4b4b4; padding-right: 1px; }
.tools button { flex: none; display: flex; align-items: center; justify-content: center; width: 32px; height: 32px; }
.tools button svg { width: 24px; height: 24px; }
.tools button:disabled svg { opacity: .5; }
.tools .pressed { height: 30px; margin: 1px 0; border: 1px solid #aaa; border-radius: 2px; background: #dcdcdc; }
.dots-h { flex: none; width: 18px; height: 15px; background: radial-gradient(circle, #aaa 0 1px, transparent 1px) center / 3px 3px content-box; padding: 6px 0 3px; }
.dots-h.first { height: 14px; padding: 5px 0 3px; }
.dots-h.wide { height: 29px; padding: 21px 0 2px; }
.dots-v { width: 5px; height: 18px; background: radial-gradient(circle, #aaa 0 1px, transparent 1px) center / 3px 3px; }
.dots-line { width: 18px; height: 1px; background: repeating-linear-gradient(90deg, #999 0 1px, transparent 1px 3px); }
.dots-col { display: block; width: 1px; height: 17px; background: repeating-linear-gradient(#999 0 1px, transparent 1px 3px); }
.sep { flex: none; width: 20px; height: 7px; border-bottom: 1px solid #fff; background: linear-gradient(#ccc, #ccc) 0 5px / 100% 1px no-repeat; }
.sep.top { height: 6px; background-position: 0 3px; border: 0; }
.win-text { font: 8px "DejaVu Sans", sans-serif; }
.win-text.mid { font-size: 10px; }
.win-text.big { font-size: 11px; }
.rot { font: bold 11px "Noto Sans", sans-serif; }
.plane { font: bold 13px "Liberation Serif", serif; fill: #5c0a10; }
.bigs { font: bold 18px "Liberation Serif", serif; }
.cutx { font: bold 17px "Liberation Serif", serif; }

/* docked panels */
.docks { flex: none; width: 456px; display: flex; flex-direction: column; min-height: 0; }
.dock-title { flex: none; display: flex; align-items: center; gap: 3px; height: 21px; padding: 0 1px 0 4px; }
.dock-title h2 { flex: 1; font: inherit; }
.dock-title button { width: 11px; height: 11px; outline: 1px solid #777; outline-offset: -1px; border-radius: 2px; }
.dock-title + .dock-body { margin-top: 8px; }
.dock-body { margin: 0 8px 0 9px; }
.dock-body.grow { flex: 1; display: flex; flex-direction: column; min-height: 0; }
.tabs { flex: none; display: flex; align-items: flex-end; height: 27px; }
.tabs > button { flex: none; height: 25px; padding: 0 12px 0 11px; margin-left: -1px; border: 1px solid #b4b4b4; border-bottom: 0; border-radius: 3px 3px 0 0; background: #e6e6e6; }
.tabs > button.on { z-index: 1; height: 28px; margin: 0 0 -1px; padding: 0 13px 3px 11px; background: linear-gradient(#fff, #fbfbfb); }
.tabs > button:disabled { color: #bbb; }
.tabs > .cut { flex: 1 1 0; min-width: 0; overflow: hidden; text-align: left; white-space: nowrap; padding-right: 0; border-right: 0; }
.tabs > .sliver { padding: 0; }
.tab-arrows { flex: none; display: flex; height: 28px; margin-bottom: -1px; z-index: 1; }
.tab-arrows button { width: 16px; border: 1px solid #aaa; border-radius: 2px; margin-left: -1px; }
.pane { border: 1px solid #aaa; padding: 1px; background: #fbfbfb; }
.splitter { flex: none; display: flex; align-items: center; justify-content: center; height: 23px; padding-left: 4px; }
.splitter.short { height: 15px; padding-top: 7px; }
.side-grip { flex: none; width: 8px; padding: 344px 0 0 4px; }

.grid { display: flex; border: 1px solid #b4b4b4; background: #fff; }
.grid.materials { height: 71px; }
.grid.scalars { flex-direction: column; height: 102px; }
.grid-main { flex: 1; min-height: 0; display: flex; }
.grid-view { flex: 1; min-width: 0; overflow: hidden; }
table { width: 100%; table-layout: fixed; border-collapse: separate; border-spacing: 0; }
th { width: 28px; height: 20px; padding: 0 0 0 2px; font-weight: normal; text-align: left; border-bottom: 1px solid #b4b4b4; border-left: 1px solid #c4c4c4; background: linear-gradient(#fcfcfc, #eaeaea); }
th svg { width: 16px; height: 16px; }
th.name { width: auto; border-left: 0; }
th.last { width: 32px; }
th.field { width: 43px; }
th.iso { width: 32px; }
td { height: 17px; padding: 0 0 0 3px; line-height: 0; }
td.name { line-height: 17px; white-space: nowrap; }
.alt td { background: #f7f7f7; }
.sel td { background: #308cc6; color: #fff; }
input[type=checkbox] { appearance: none; flex: none; width: 14px; height: 14px; margin: 0; vertical-align: top; border: 1px solid #b4b4b4; background: #fff; }
input[type=checkbox]:checked { background: #fff url("data:image/svg+xml,%3Csvg xmlns='http://www.w3.org/2000/svg' viewBox='0 0 12 12'%3E%3Cpath d='M2.5 5.500L5 9.500L9.500 2' fill='none' stroke='black' stroke-width='1.900'/%3E%3C/svg%3E"); }
input[type=checkbox]:disabled { background: #efefef; border-color: #ccc; }
.arr { display: flex; align-items: center; justify-content: center; background: linear-gradient(#fff, #f0f0f0); }
.arr::after { content: ""; width: 8px; height: 4px; background: #555; clip-path: polygon(0 100%, 50% 0, 100% 100%); }
.arr.down::after { clip-path: polygon(0 0, 100% 0, 50% 100%); }
.arr.lt::after { width: 4px; height: 8px; clip-path: polygon(100% 0, 100% 100%, 0 50%); }
.arr.rt::after { width: 4px; height: 8px; clip-path: polygon(0 0, 100% 50%, 0 100%); }
.arr:disabled::after { background: #bbb; }
.vscroll { flex: none; width: 14px; display: flex; flex-direction: column; border-left: 1px solid #b4b4b4; }
.vscroll .arr { flex: none; height: 13px; }
.vscroll .thumb { flex: 2; border: solid #b4b4b4; border-width: 1px 0; background: linear-gradient(90deg, #fff, #eee); }
.vscroll .track { flex: 1; background: #e2e2e2; border-bottom: 1px solid #b4b4b4; }
.scalars .vscroll .thumb, .scalars .vscroll .track { flex: 1; }
.hscroll { flex: none; height: 15px; display: flex; border-top: 1px solid #b4b4b4; }
.hscroll .arr { width: 14px; }
.hscroll .thumb { flex: 1; border: solid #b4b4b4; border-width: 0 1px; background: linear-gradient(#fff, #eee); }
.hscroll .track { width: 11px; background: #e2e2e2; border-right: 1px solid #b4b4b4; }
.hscroll .corner { width: 14px; border-left: 1px solid #b4b4b4; background: #efefef; }

input[type=text] { min-width: 0; height: 25px; padding: 0 3px; border: 1px solid #aaa; border-radius: 3px; background: #fff; font: inherit; color: #111; }
.btn { height: 25px; border: 1px solid #aaa; border-radius: 3px; background: linear-gradient(#fff, #ececec); }
label { display: flex; align-items: center; gap: 5px; }
.range-tabs { margin: 9px 9px 8px; }
.range-form { display: grid; grid-template-columns: 1fr 59px 80px; gap: 7px 6px; align-items: center; padding: 11px 10px; }
.unit { text-align: right; }
.props { flex: 1; min-height: 0; overflow: hidden; padding: 11px 10px 11px 11px; }
.props fieldset { margin: 3px 0 18px; min-width: 0; height: 80px; padding: 10px; padding-right: 11px; border: 1px solid #ddd; border-radius: 2px; background: #f7f7f7; }
.row { display: flex; gap: 6px; align-items: center; }
.row > input { flex: 1; }
.font { width: 50px; }
.opts { margin-top: 6px; }
.opts .path { flex: 0 0 194px; }
.off { color: #bbb; }
.spin { display: flex; width: 93px; height: 24px; margin-left: auto; border: 1px solid #aaa; border-radius: 3px; background: #efefef; }
.spin input[type=text] { flex: 1; height: 22px; border: 0; background: none; color: #bbb; }
.steps { width: 14px; display: flex; flex-direction: column; border-left: 1px solid #bbb; }
.steps .arr { flex: 1; }
.steps .arr::after { background: #ccc; }
.legend { padding-left: 8px; }

/* plot */
.plot-area { flex: 1; min-width: 0; display: flex; padding: 19px 18px 0 17px; }
.plot { flex: 1; min-width: 0; display: flex; justify-content: center; overflow: hidden; border: 2px solid #000; border-bottom: 0; background: linear-gradient(#fff, #c1c1c1); }
.plot-title { font: bold 11px "Liberation Sans", sans-serif; }
.axis { font: 600 14px "Noto Sans", sans-serif; }
.scale { font: bold 8px "Liberation Sans", sans-serif; }
```
